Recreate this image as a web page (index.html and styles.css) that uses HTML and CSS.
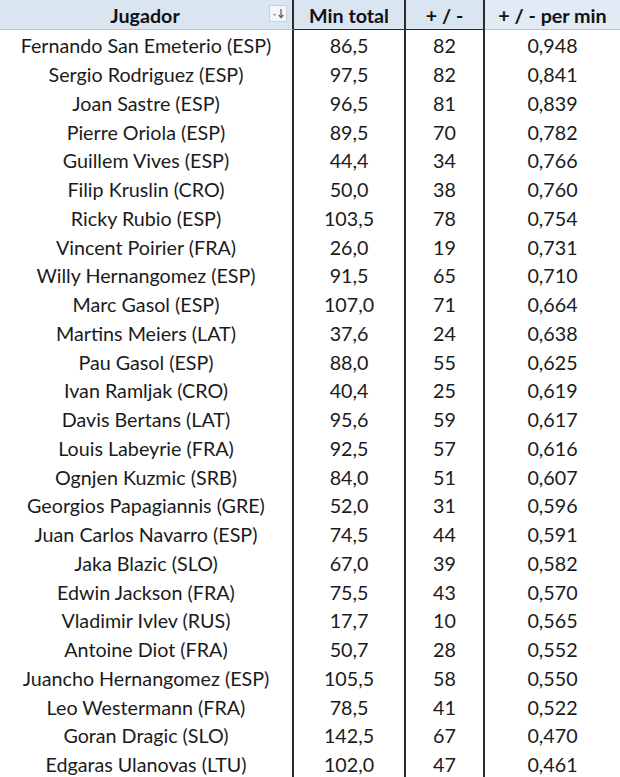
FILE: index.html
```html
<!DOCTYPE html>
<html lang="es">
<head>
<meta charset="utf-8">
<title>+/- por minuto</title>
<link rel="stylesheet" href="styles.css">
</head>
<body>
<div class="sheet">
  <div class="head c1"><span class="hlabel">Jugador</span>
    <span class="filter"><svg width="18" height="17" viewBox="0 0 18 17"><path d="M4 9 L7 9 L5.5 11 Z" fill="#8a8a8a"/><path d="M12 4 L12 12" stroke="#555" stroke-width="1.2"/><path d="M9.8 10 L12 12.6 L14.2 10" fill="none" stroke="#555" stroke-width="1.2"/></svg></span>
  </div>
  <div class="head c2">Min total</div>
  <div class="head c3">+ / -</div>
  <div class="head c4">+ / - per min</div>
</div>
<div class="sheet body">
  <div class="cell c1">Fernando San Emeterio (ESP)</div><div class="cell c2">86,5</div><div class="cell c3">82</div><div class="cell c4">0,948</div>
  <div class="cell c1">Sergio Rodriguez (ESP)</div><div class="cell c2">97,5</div><div class="cell c3">82</div><div class="cell c4">0,841</div>
  <div class="cell c1">Joan Sastre (ESP)</div><div class="cell c2">96,5</div><div class="cell c3">81</div><div class="cell c4">0,839</div>
  <div class="cell c1">Pierre Oriola (ESP)</div><div class="cell c2">89,5</div><div class="cell c3">70</div><div class="cell c4">0,782</div>
  <div class="cell c1">Guillem Vives (ESP)</div><div class="cell c2">44,4</div><div class="cell c3">34</div><div class="cell c4">0,766</div>
  <div class="cell c1">Filip Kruslin (CRO)</div><div class="cell c2">50,0</div><div class="cell c3">38</div><div class="cell c4">0,760</div>
  <div class="cell c1">Ricky Rubio (ESP)</div><div class="cell c2">103,5</div><div class="cell c3">78</div><div class="cell c4">0,754</div>
  <div class="cell c1">Vincent Poirier (FRA)</div><div class="cell c2">26,0</div><div class="cell c3">19</div><div class="cell c4">0,731</div>
  <div class="cell c1">Willy Hernangomez (ESP)</div><div class="cell c2">91,5</div><div class="cell c3">65</div><div class="cell c4">0,710</div>
  <div class="cell c1">Marc Gasol (ESP)</div><div class="cell c2">107,0</div><div class="cell c3">71</div><div class="cell c4">0,664</div>
  <div class="cell c1">Martins Meiers (LAT)</div><div class="cell c2">37,6</div><div class="cell c3">24</div><div class="cell c4">0,638</div>
  <div class="cell c1">Pau Gasol (ESP)</div><div class="cell c2">88,0</div><div class="cell c3">55</div><div class="cell c4">0,625</div>
  <div class="cell c1">Ivan Ramljak (CRO)</div><div class="cell c2">40,4</div><div class="cell c3">25</div><div class="cell c4">0,619</div>
  <div class="cell c1">Davis Bertans (LAT)</div><div class="cell c2">95,6</div><div class="cell c3">59</div><div class="cell c4">0,617</div>
  <div class="cell c1">Louis Labeyrie (FRA)</div><div class="cell c2">92,5</div><div class="cell c3">57</div><div class="cell c4">0,616</div>
  <div class="cell c1">Ognjen Kuzmic (SRB)</div><div class="cell c2">84,0</div><div class="cell c3">51</div><div class="cell c4">0,607</div>
  <div class="cell c1">Georgios Papagiannis (GRE)</div><div class="cell c2">52,0</div><div class="cell c3">31</div><div class="cell c4">0,596</div>
  <div class="cell c1">Juan Carlos Navarro (ESP)</div><div class="cell c2">74,5</div><div class="cell c3">44</div><div class="cell c4">0,591</div>
  <div class="cell c1">Jaka Blazic (SLO)</div><div class="cell c2">67,0</div><div class="cell c3">39</div><div class="cell c4">0,582</div>
  <div class="cell c1">Edwin Jackson (FRA)</div><div class="cell c2">75,5</div><div class="cell c3">43</div><div class="cell c4">0,570</div>
  <div class="cell c1">Vladimir Ivlev (RUS)</div><div class="cell c2">17,7</div><div class="cell c3">10</div><div class="cell c4">0,565</div>
  <div class="cell c1">Antoine Diot (FRA)</div><div class="cell c2">50,7</div><div class="cell c3">28</div><div class="cell c4">0,552</div>
  <div class="cell c1">Juancho Hernangomez (ESP)</div><div class="cell c2">105,5</div><div class="cell c3">58</div><div class="cell c4">0,550</div>
  <div class="cell c1">Leo Westermann (FRA)</div><div class="cell c2">78,5</div><div class="cell c3">41</div><div class="cell c4">0,522</div>
  <div class="cell c1">Goran Dragic (SLO)</div><div class="cell c2">142,5</div><div class="cell c3">67</div><div class="cell c4">0,470</div>
  <div class="cell c1">Edgaras Ulanovas (LTU)</div><div class="cell c2">102,0</div><div class="cell c3">47</div><div class="cell c4">0,461</div>
</div>
</body>
</html>
```
FILE: styles.css
```css
html {
  margin: 0;
  padding: 0;
  background: #ffffff;
}
body {
  margin: 0;
  padding: 0;
  background: #ffffff;
  font-family: Lato, "Open Sans", sans-serif;
  color: #1b1b1b;
  font-size: 19.7px;
}
.sheet {
  display: grid;
  grid-template-columns: 294px 112px 79px 1fr;
}
.sheet.body {
  grid-auto-rows: 28.75px;
}
.head {
  height: 28px;
  display: flex;
  align-items: center;
  justify-content: center;
  font-weight: bold;
  color: #111;
  background: #dae5f2;
  border-bottom: 1px solid #b3c5dc;
  padding-top: 1px;
}
.head.c2, .head.c3 {
  border-bottom-color: #2a2a2a;
}
.head.c4 {
  background: #e2eaf5;
}
.c1 { position: relative; }
.c1, .c2, .c3 {
  border-right: 2px solid #2a2a2a;
}
.hlabel {
  margin-left: -2px;
}
.filter {
  position: absolute;
  right: 5px;
  top: 5px;
  width: 18px;
  height: 17px;
  box-sizing: border-box;
  border: 1px solid #c9cfd8;
  background: #f3f5f8;
  display: flex;
}
.filter svg {
  margin: -1px;
}
.cell {
  display: flex;
  align-items: center;
  justify-content: center;
  padding-top: 3px;
  box-sizing: border-box;
  white-space: nowrap;
}
```
